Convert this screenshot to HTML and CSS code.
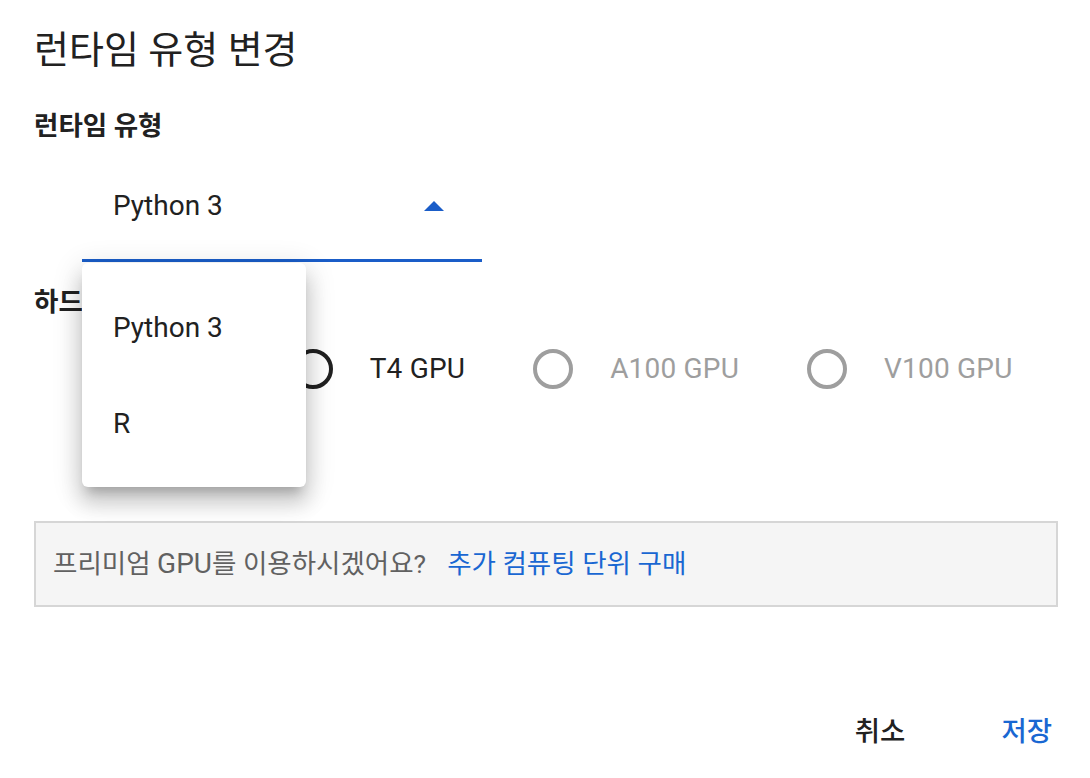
FILE: index.html
```html
<!DOCTYPE html>
<html lang="ko">
<head>
<meta charset="utf-8">
<title>런타임 유형 변경</title>
<link rel="stylesheet" href="styles.css">
</head>
<body>
<div class="dialog">
  <h1 class="title">런타임 유형 변경</h1>

  <div class="label label-runtime">런타임 유형</div>
  <div class="field">
    <div class="select">
      <span class="select-value">Python 3</span>
      <svg class="caret" width="20" height="10" viewBox="0 0 20 10"><polygon points="0,10 10,0 20,10"/></svg>
    </div>
    <div class="menu">
      <div class="menu-item">Python 3</div>
      <div class="menu-item">R</div>
    </div>
  </div>

  <div class="label label-hw">하드웨어 가속기</div>
  <div class="radios">
    <label class="radio">
      <svg width="40" height="40" viewBox="0 0 40 40"><circle cx="20" cy="20" r="18"/><circle class="dot" cx="20" cy="20" r="10"/></svg>
      <span>CPU</span>
    </label>
    <label class="radio">
      <svg width="40" height="40" viewBox="0 0 40 40"><circle cx="20" cy="20" r="18"/></svg>
      <span>T4 GPU</span>
    </label>
    <label class="radio disabled">
      <svg width="40" height="40" viewBox="0 0 40 40"><circle cx="20" cy="20" r="18"/></svg>
      <span>A100 GPU</span>
    </label>
    <label class="radio disabled">
      <svg width="40" height="40" viewBox="0 0 40 40"><circle cx="20" cy="20" r="18"/></svg>
      <span>V100 GPU</span>
    </label>
    <label class="radio">
      <svg width="40" height="40" viewBox="0 0 40 40"><circle cx="20" cy="20" r="18"/></svg>
      <span>TPU</span>
    </label>
  </div>

  <div class="notice">
    <span>프리미엄 <span class="latin">GPU</span>를 이용하시겠어요?</span>
    <a class="notice-link" href="#">추가 컴퓨팅 단위 구매</a>
  </div>

  <div class="actions">
    <button class="btn btn-cancel" type="button">취소</button>
    <button class="btn btn-save" type="button">저장</button>
  </div>
</div>
</body>
</html>
```

FILE: styles.css
```css
* {
  box-sizing: border-box;
}

body {
  margin: 0;
  background: #ffffff;
  color: #212121;
  font-family: Roboto, "Noto Sans CJK KR", sans-serif;
}

.dialog {
  padding: 26px 32px 0 34px;
}

.title {
  margin: 0;
  font-size: 38px;
  font-weight: 400;
  line-height: 48px;
  color: #212121;
}

.label {
  font-size: 26.5px;
  font-weight: 700;
  line-height: 32px;
  color: #212121;
}

.label-runtime {
  margin-top: 36px;
}

.field {
  position: relative;
  width: 400px;
  margin: 8px 0 0 48px;
}

.select {
  display: flex;
  align-items: center;
  justify-content: space-between;
  padding: 40px 38px 37px 31px;
  border-bottom: 3px solid #1a5dc8;
  font-size: 28px;
  line-height: 32px;
}

.caret {
  display: block;
  fill: #1a5dc8;
}

.menu {
  position: absolute;
  top: calc(100% + 1px);
  left: 0;
  width: 224px;
  padding: 16px 0;
  background: #ffffff;
  border-radius: 6px;
  box-shadow: 0 10px 10px -6px rgba(0, 0, 0, 0.2),
              0 16px 20px 2px rgba(0, 0, 0, 0.14),
              0 6px 28px 4px rgba(0, 0, 0, 0.12);
  z-index: 2;
}

.menu-item {
  display: flex;
  align-items: center;
  height: 96px;
  padding-left: 31px;
  font-size: 28px;
  color: #212121;
}

.label-hw {
  margin-top: 24px;
}

.radios {
  display: flex;
  flex-wrap: wrap;
  column-gap: 68px;
  row-gap: 32px;
  margin-top: 31px;
  padding-left: 59px;
}

.radio {
  display: flex;
  align-items: center;
  font-size: 28px;
  line-height: 40px;
  letter-spacing: 0.2px;
  color: #212121;
}

.radio svg {
  display: block;
  flex: none;
  margin-right: 37px;
  fill: none;
  stroke: #212121;
  stroke-width: 4;
}

.radio svg .dot {
  fill: #212121;
  stroke: none;
}

.radio.disabled {
  color: #9e9e9e;
}

.radio.disabled svg {
  stroke: #9e9e9e;
}

.notice {
  display: flex;
  align-items: center;
  height: 86px;
  margin-top: 60px;
  padding-left: 17px;
  border: 2px solid #d6d6d6;
  background: #f5f5f5;
  font-size: 26.5px;
  line-height: 32px;
  color: #616161;
}

.latin {
  font-size: 28px;
}

.notice-link {
  margin-left: 21px;
  color: #1967d2;
  text-decoration: none;
}

.actions {
  display: flex;
  justify-content: flex-end;
  gap: 80px;
  margin-top: 101px;
  margin-right: -2px;
}

.btn {
  padding: 0 8px;
  border: 0;
  background: none;
  font-family: inherit;
  font-size: 27.5px;
  font-weight: 500;
  line-height: 48px;
  cursor: pointer;
}

.btn-cancel {
  color: #212121;
}

.btn-save {
  color: #1967d2;
}
```
